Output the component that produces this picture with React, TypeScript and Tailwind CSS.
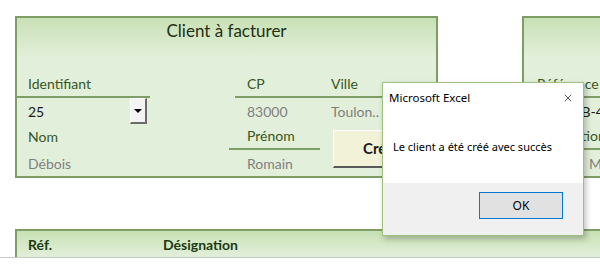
import React from 'react';
import { X } from 'lucide-react';

const labelCls = "text-[#375623]";
const grayCls = "text-[#7f7f7f]";

const Dropdown = () => (
  <div className="w-[17px] h-[26px] bg-[#f4f4f4] border-r-2 border-b-2 border-[#6b6b6b] border-t border-l border-t-white border-l-white flex items-center justify-center">
    <div className="w-0 h-0 border-l-[4px] border-r-[4px] border-t-[4px] border-l-transparent border-r-transparent border-t-black" />
  </div>
);

const ClientPanel = () => (
  <div className="w-[423px] h-[162px] shrink-0 border-2 border-[#7f9e65] bg-gradient-to-b from-[#c8e1b5] via-[#e2efda] via-25% to-[#e2efda] flex flex-col">
    <div className="h-[26px] flex items-center justify-center text-[17px] text-[#1f2f14]">Client à facturer</div>
    <div className="h-[28px]" />
    <div className="flex">
      {/* left column */}
      <div className="w-[135px] flex flex-col ml-[-2px]">
        <div className={`h-[26px] border-b-2 border-[#7f9e65] pl-[13px] flex items-center pb-[2px] ${labelCls}`}>Identifiant</div>
        <div className="h-[26px] flex items-center pl-[13px] pr-[3px] justify-between">
          <span className="text-[#1a1a1a]">25</span>
          <Dropdown />
        </div>
        <div className={`h-[26px] pl-[13px] flex items-center pb-[2px] ${labelCls}`}>Nom</div>
        <div className={`h-[26px] pl-[13px] flex items-center ${grayCls}`}>Débois</div>
      </div>
      {/* right block */}
      <div className="ml-[79px] flex-1 flex flex-col">
        <div className="h-[26px] ml-[6px] border-b-2 border-[#7f9e65] flex items-center pb-[2px]">
          <span className={`pl-[12px] w-[96px] ${labelCls}`}>CP</span>
          <span className={labelCls}>Ville</span>
        </div>
        <div className="h-[26px] ml-[6px] flex items-center">
          <span className={`pl-[12px] w-[96px] ${grayCls}`}>83000</span>
          <span className={grayCls}>Toulon..</span>
        </div>
        <div className="flex">
          <div className="w-[91px] flex flex-col">
            <div className={`h-[26px] border-b-2 border-[#7f9e65] pl-[18px] flex items-center pb-[2px] ${labelCls}`}>Prénom</div>
            <div className={`h-[26px] pl-[18px] flex items-center ${grayCls}`}>Romain</div>
          </div>
          <div className="ml-[13px] mt-[6px] h-[38px] flex-1 bg-[#f2f2d8] border-t border-l border-white border-b-2 border-b-[#595959] flex items-center pl-[29px] text-[15px] font-bold text-[#1a1a1a]">
            Créer
          </div>
        </div>
      </div>
    </div>
  </div>
);

const FacturePanel = () => (
  <div className="w-[200px] h-[162px] shrink-0 border-2 border-r-0 border-[#7f9e65] bg-gradient-to-b from-[#c8e1b5] via-[#e2efda] via-25% to-[#e2efda] flex flex-col overflow-hidden">
    <div className="h-[54px]" />
    <div className={`h-[26px] border-b-2 border-[#7f9e65] pl-[13px] flex items-center pb-[2px] ${labelCls}`}>Référence</div>
    <div className="h-[26px] pl-[49px] flex items-center text-[#1a1a1a]">ZB-4</div>
    <div className={`h-[26px] border-b-2 border-[#7f9e65] pl-[8px] flex items-center pb-[2px] ${labelCls}`}>Désignation</div>
    <div className={`h-[26px] pl-[65px] flex items-center ${grayCls}`}>M</div>
  </div>
);

const Dialog = () => (
  <div className="absolute left-[382px] top-[82px] w-[202px] h-[154px] bg-white border border-[#9fc083] shadow-[2px_3px_6px_rgba(0,0,0,0.25)] flex flex-col font-['Noto_Sans',sans-serif] text-[11px] text-black">
    <div className="h-[29px] flex items-center justify-between pl-[6px] pr-[9px]">
      <span className="text-[11.5px]">Microsoft Excel</span>
      <X className="w-[12px] h-[12px]" strokeWidth={1.3} />
    </div>
    <div className="h-[71px] flex items-center pl-[10px] pb-[1px]">Le client a été créé avec succès</div>
    <div className="flex-1 bg-[#f0f0f0] flex justify-end items-start pt-[9px] pr-[20px]">
      <div className="w-[84px] h-[27px] bg-[#e1e1e1] border border-[#0078d7] flex items-center justify-center text-[12px]">OK</div>
    </div>
  </div>
);

export default function App() {
  return (
    <div className="relative w-[600px] h-[275px] overflow-hidden bg-white font-['Lato',sans-serif] text-[14px]">
      <div className="flex pt-[16px] pl-[15px] gap-[84px]">
        <ClientPanel />
        <FacturePanel />
      </div>
      <div className="mt-[51px] pl-[15px]">
        <div className="h-[28px] border-t-2 border-l-2 border-[#7f9e65] bg-gradient-to-b from-[#c8e1b5] to-[#e2efda] flex items-center font-bold text-[#203a12]">
          <span className="pl-[11px] w-[146px]">Réf.</span>
          <span>Désignation</span>
        </div>
      </div>
      <div className="h-px bg-[#c8c8c8]" />
      <Dialog />
    </div>
  );
}
